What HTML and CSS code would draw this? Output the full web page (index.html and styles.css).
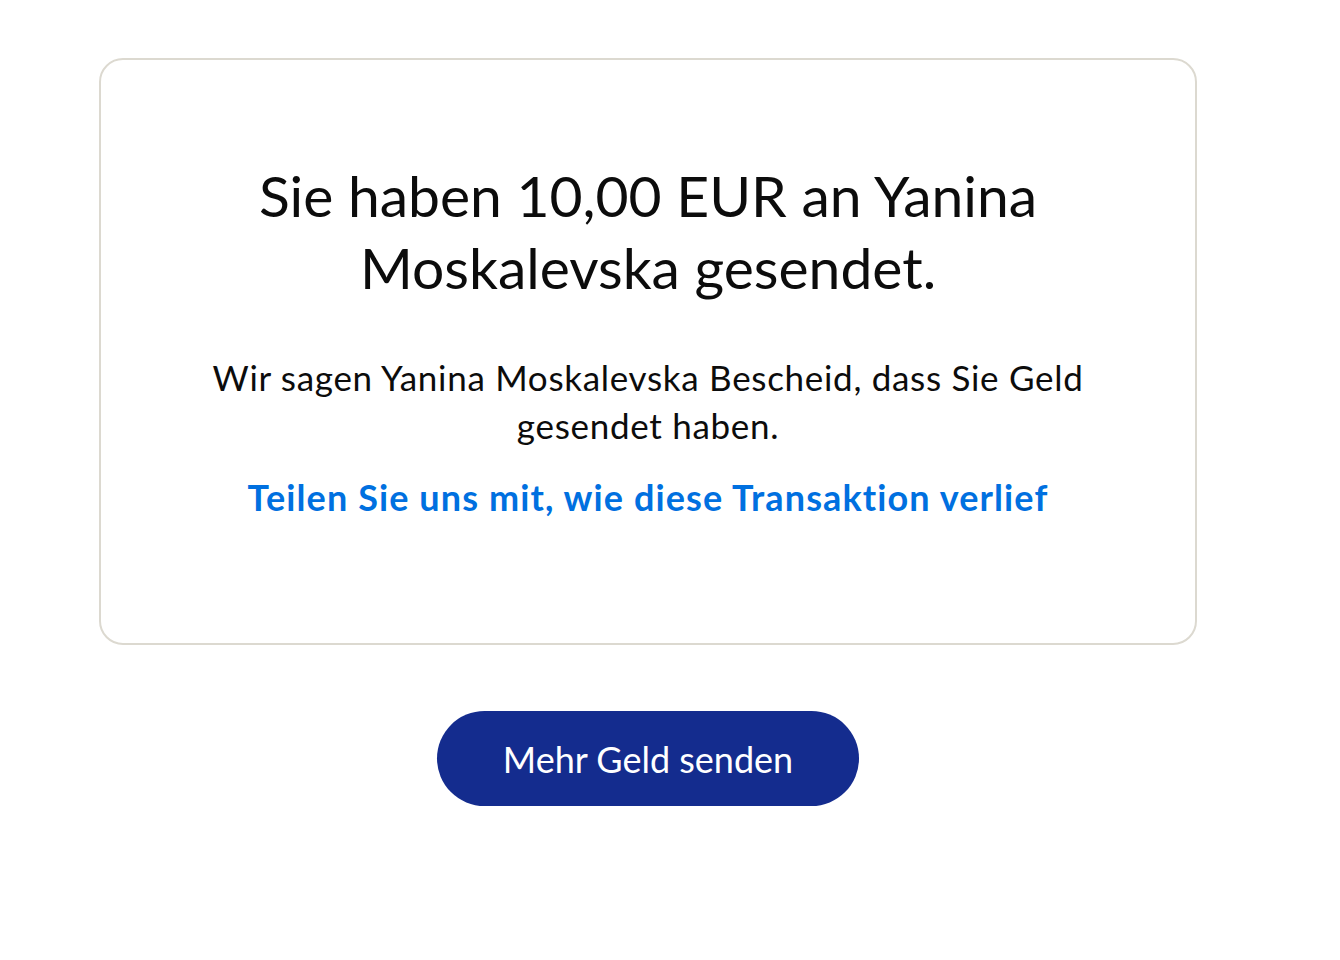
FILE: index.html
```html
<!DOCTYPE html>
<html lang="de">
<head>
<meta charset="utf-8">
<title>Gesendet</title>
<link rel="stylesheet" href="styles.css">
</head>
<body>
<main class="page">
  <section class="card">
    <h1 class="title">Sie haben 10,00 EUR an Yanina Moskalevska gesendet.</h1>
    <p class="info">Wir sagen Yanina Moskalevska Bescheid, dass Sie Geld gesendet haben.</p>
    <a class="feedback" href="#">Teilen Sie uns mit, wie diese Transaktion verlief</a>
  </section>
  <div class="actions">
    <a class="btn" href="#">Mehr Geld senden</a>
  </div>
</main>
</body>
</html>
```
FILE: styles.css
```css
html, body {
  margin: 0;
  padding: 0;
  background: #ffffff;
}
body {
  font-family: Lato, "Open Sans", "Liberation Sans", sans-serif;
  font-variant-ligatures: none;
  color: #0c0c0c;
}
.page {
  width: 1098px;
  margin: 58px 0 0 99px;
  display: flex;
  flex-direction: column;
  align-items: center;
}
.card {
  box-sizing: border-box;
  width: 100%;
  height: 587px;
  border: 2px solid #dcd9d0;
  border-radius: 24px;
  padding: 99px 100px 0;
  display: flex;
  flex-direction: column;
  align-items: center;
  text-align: center;
}
.title {
  margin: 0;
  font-size: 57px;
  line-height: 72px;
  font-weight: 400;
  max-width: 820px;
}
.info {
  margin: 50px 0 0;
  font-size: 35px;
  line-height: 48px;
  letter-spacing: 0.7px;
  max-width: 900px;
}
.feedback {
  margin-top: 24px;
  font-size: 36px;
  line-height: 48px;
  font-weight: 700;
  letter-spacing: 1.1px;
  color: #0070e0;
  text-decoration: none;
}
.actions {
  margin-top: 66px;
  display: flex;
  justify-content: center;
}
.btn {
  box-sizing: border-box;
  width: 422px;
  height: 95px;
  border-radius: 48px;
  background: #142c8e;
  color: #ffffff;
  font-size: 36px;
  display: flex;
  align-items: center;
  justify-content: center;
  text-decoration: none;
}
```
